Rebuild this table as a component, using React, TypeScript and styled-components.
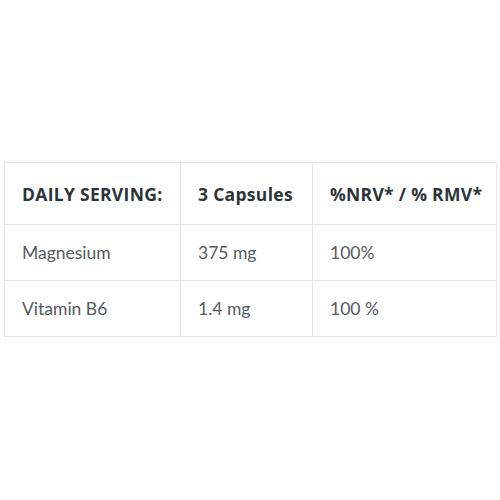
import React from "react";
import styled, { createGlobalStyle } from "styled-components";

const Global = createGlobalStyle`
  html, body { margin: 0; padding: 0; background: #ffffff; }
  body { font-family: "Open Sans", Lato, sans-serif; }
`;

const Page = styled.div`
  padding: 162px 4px 0 4px;
`;

const Table = styled.table`
  width: 492px;
  border-collapse: collapse;
  table-layout: fixed;
  border: 1px solid #e6e6e6;
`;

const HeadCell = styled.th`
  height: 61px;
  padding: 0 0 0 17px;
  text-align: left;
  font-family: "Open Sans", sans-serif;
  font-weight: 700;
  font-size: 17.5px;
  color: #2c3437;
  border: 1px solid #e6e6e6;
  letter-spacing: 0.3px;
  white-space: nowrap;
`;

const Cell = styled.td`
  height: 55px;
  padding: 0 0 0 17px;
  font-family: Lato, sans-serif;
  font-size: 17.5px;
  color: #555a5c;
  border: 1px solid #e6e6e6;
`;

const rows = [
  ["Magnesium", "375 mg", "100%"],
  ["Vitamin B6", "1.4 mg", "100 %"],
];

export default function App() {
  return (
    <>
      <Global />
      <Page>
        <Table>
          <colgroup>
            <col style={{ width: 176 }} />
            <col style={{ width: 132 }} />
            <col style={{ width: 184 }} />
          </colgroup>
          <thead>
            <tr>
              <HeadCell>DAILY SERVING:</HeadCell>
              <HeadCell>3 Capsules</HeadCell>
              <HeadCell>%NRV* / % RMV*</HeadCell>
            </tr>
          </thead>
          <tbody>
            {rows.map((r) => (
              <tr key={r[0]}>
                {r.map((c, i) => (
                  <Cell key={i}>{c}</Cell>
                ))}
              </tr>
            ))}
          </tbody>
        </Table>
      </Page>
    </>
  );
}
